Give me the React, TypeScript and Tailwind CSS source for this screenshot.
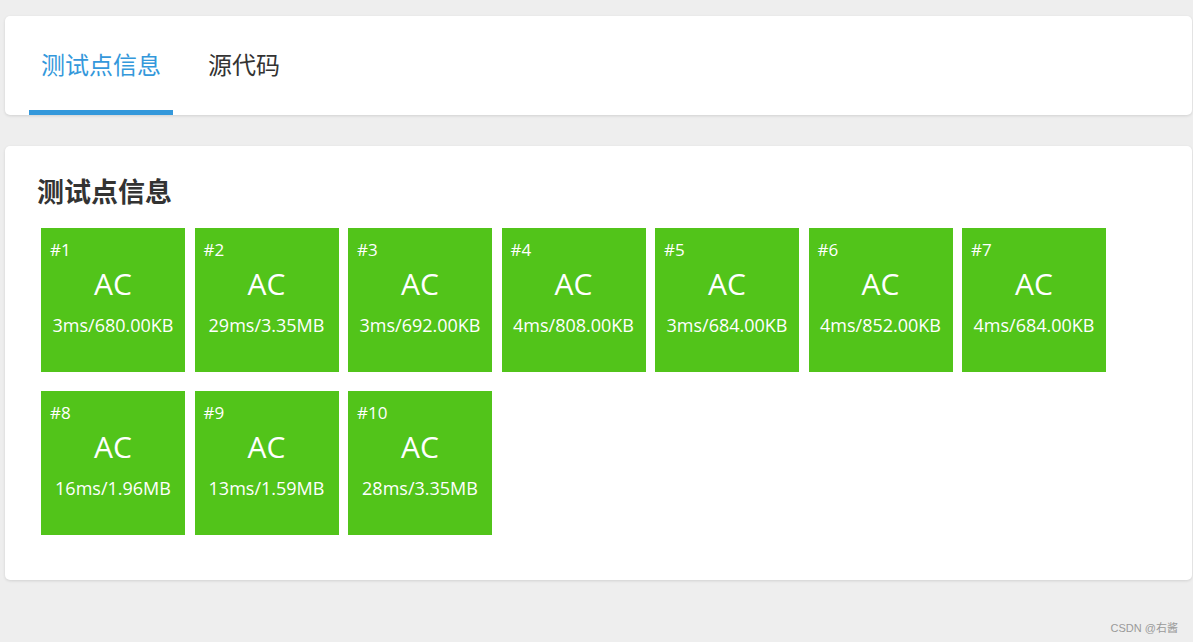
import React from "react";

const cases = [
  { id: 1, info: "3ms/680.00KB" },
  { id: 2, info: "29ms/3.35MB" },
  { id: 3, info: "3ms/692.00KB" },
  { id: 4, info: "4ms/808.00KB" },
  { id: 5, info: "3ms/684.00KB" },
  { id: 6, info: "4ms/852.00KB" },
  { id: 7, info: "4ms/684.00KB" },
  { id: 8, info: "16ms/1.96MB" },
  { id: 9, info: "13ms/1.59MB" },
  { id: 10, info: "28ms/3.35MB" },
];

const font = { fontFamily: '"Open Sans", "Noto Sans CJK SC", sans-serif' };

export default function App() {
  return (
    <div className="min-h-[642px] w-full bg-[#eeeeee] pt-[16px] pl-[5px] pr-[1px]" style={font}>
      <div className="rounded-[5px] bg-white shadow-[0_1px_3px_rgba(0,0,0,0.12)] pl-[24px] flex gap-[23px]">
        <div className="px-[12px] pt-[33px] pb-[29px] border-b-[5px] border-[#3498db] text-[24px] leading-[32px] text-[#3498db]">
          测试点信息
        </div>
        <div className="px-[12px] pt-[33px] pb-[29px] border-b-[5px] border-transparent text-[24px] leading-[32px] text-[#333333]">
          源代码
        </div>
      </div>

      <div className="mt-[31px] rounded-[5px] bg-white shadow-[0_1px_3px_rgba(0,0,0,0.12)] pl-[32px] pr-[32px] pt-[28px] pb-[45px]">
        <h2 className="text-[27px] leading-[36px] font-bold text-[#333333]">测试点信息</h2>
        <div className="mt-[18px] ml-[4px] flex flex-wrap gap-x-[9.5px] gap-y-[19px]">
          {cases.map((c) => (
            <div key={c.id} className="w-[144px] h-[144px] bg-[#52c41a] text-white pt-[10px] px-[9px]">
              <div className="text-[17px] leading-[24px]">#{c.id}</div>
              <div className="mt-[4px] text-center text-[30px] leading-[36px]">AC</div>
              <div className="mt-[11px] -mx-[10px] text-center text-[18px] leading-[24px]">{c.info}</div>
            </div>
          ))}
        </div>
      </div>

      <div className="mt-[41px] pr-[14px] text-right text-[11px] leading-[14px] text-[#9a9a9a]" style={{ fontFamily: '"Liberation Sans", "Noto Sans CJK SC", sans-serif' }}>
        CSDN @右酱
      </div>
    </div>
  );
}
